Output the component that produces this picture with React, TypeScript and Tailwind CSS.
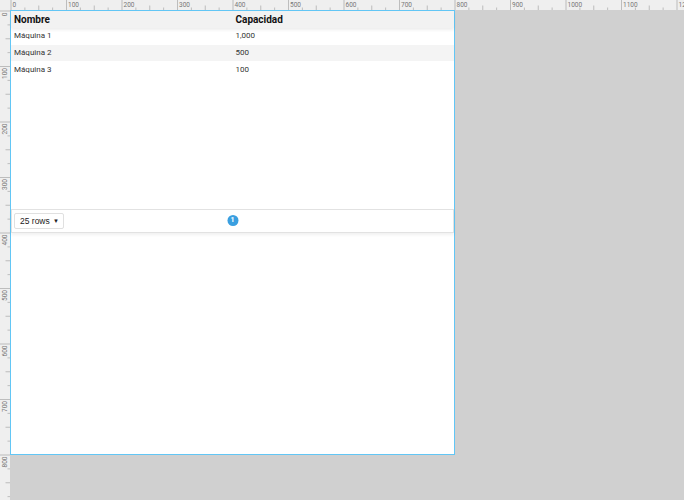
import React from 'react';

const SCALE = 0.555;

function TopRuler() {
  const ticks = [];
  for (let u = 0; u <= 1200; u += 25) {
    const x = 1 + u * SCALE;
    const len = u % 100 === 0 ? 10 : u % 50 === 0 ? 4.5 : 2.5;
    ticks.push(<line key={u} x1={x} x2={x} y1={10 - len} y2={10} stroke="#a8a8a8" strokeWidth={0.7} />);
    if (u % 100 === 0) {
      ticks.push(
        <text key={'t' + u} x={x + 1.5} y={6.5} fontSize={6.5} fill="#777" fontFamily="Roboto, sans-serif">
          {u}
        </text>
      );
    }
  }
  return (
    <svg width={674} height={10} className="block">
      <rect width={674} height={10} fill="#efefef" />
      {ticks}
    </svg>
  );
}

function LeftRuler() {
  const ticks = [];
  for (let u = 0; u <= 900; u += 25) {
    const y = 1 + u * SCALE;
    const len = u % 100 === 0 ? 10 : u % 50 === 0 ? 4.5 : 2.5;
    ticks.push(<line key={u} y1={y} y2={y} x1={10 - len} x2={10} stroke="#a8a8a8" strokeWidth={0.7} />);
    if (u % 100 === 0) {
      ticks.push(
        <text
          key={'t' + u}
          x={6.5}
          y={y + 1.5}
          fontSize={6.5}
          fill="#777"
          fontFamily="Roboto, sans-serif"
          textAnchor="end"
          transform={`rotate(-90 6.5 ${y + 1.5})`}
        >
          {u}
        </text>
      );
    }
  }
  return (
    <svg width={10} height={490} className="block">
      <rect width={10} height={490} fill="#efefef" />
      {ticks}
    </svg>
  );
}

const rows = [
  { name: 'Máquina 1', cap: '1,000' },
  { name: 'Máquina 2', cap: '500' },
  { name: 'Máquina 3', cap: '100' },
];

export default function App() {
  return (
    <div className="w-[684px] h-[500px] bg-[#d0d0d0] overflow-hidden flex flex-col font-['Roboto',sans-serif]">
      <div className="flex h-[10px] shrink-0">
        <div className="w-[10px] h-[10px] bg-[#efefef]" />
        <TopRuler />
      </div>
      <div className="flex flex-1">
        <LeftRuler />
        <div className="w-[445px] h-[445px] border border-[#62c6f5] bg-white flex flex-col">
          <div className="h-[198px] flex flex-col">
            <div className="grid grid-cols-2 h-[17px] bg-[#f2f2f2] shadow-[0_2px_3px_rgba(0,0,0,0.07)] items-center text-[10px] font-bold text-[#111] relative">
              <div className="pl-[3px]">Nombre</div>
              <div className="pl-[3px]">Capacidad</div>
            </div>
            {rows.map((r, i) => (
              <div
                key={r.name}
                className={`grid grid-cols-2 h-[16.7px] items-center text-[8px] text-[#333] ${i % 2 === 1 ? 'bg-[#f4f4f4]' : 'bg-white'}`}
              >
                <div className="pl-[3px]">{r.name}</div>
                <div className="pl-[3px]">{r.cap}</div>
              </div>
            ))}
          </div>
          <div className="h-[24px] border border-[#e2e2e2] shadow-[0_2px_3px_rgba(0,0,0,0.06)] flex items-center relative">
            <div className="ml-[2px] w-[50px] h-[16px] border border-[#e0e0e0] rounded-[2px] flex items-center justify-between pl-[5px] pr-[4px] text-[8.5px] text-[#222] font-['Liberation_Sans',sans-serif]">
              <span>25 rows</span>
              <span className="text-[6px]">▼</span>
            </div>
            <div className="absolute left-1/2 -translate-x-1/2 top-[5px] w-[11px] h-[11px] rounded-full bg-[#3a9fe0] text-white text-[7px] font-bold flex items-center justify-center">
              1
            </div>
          </div>
        </div>
      </div>
    </div>
  );
}
